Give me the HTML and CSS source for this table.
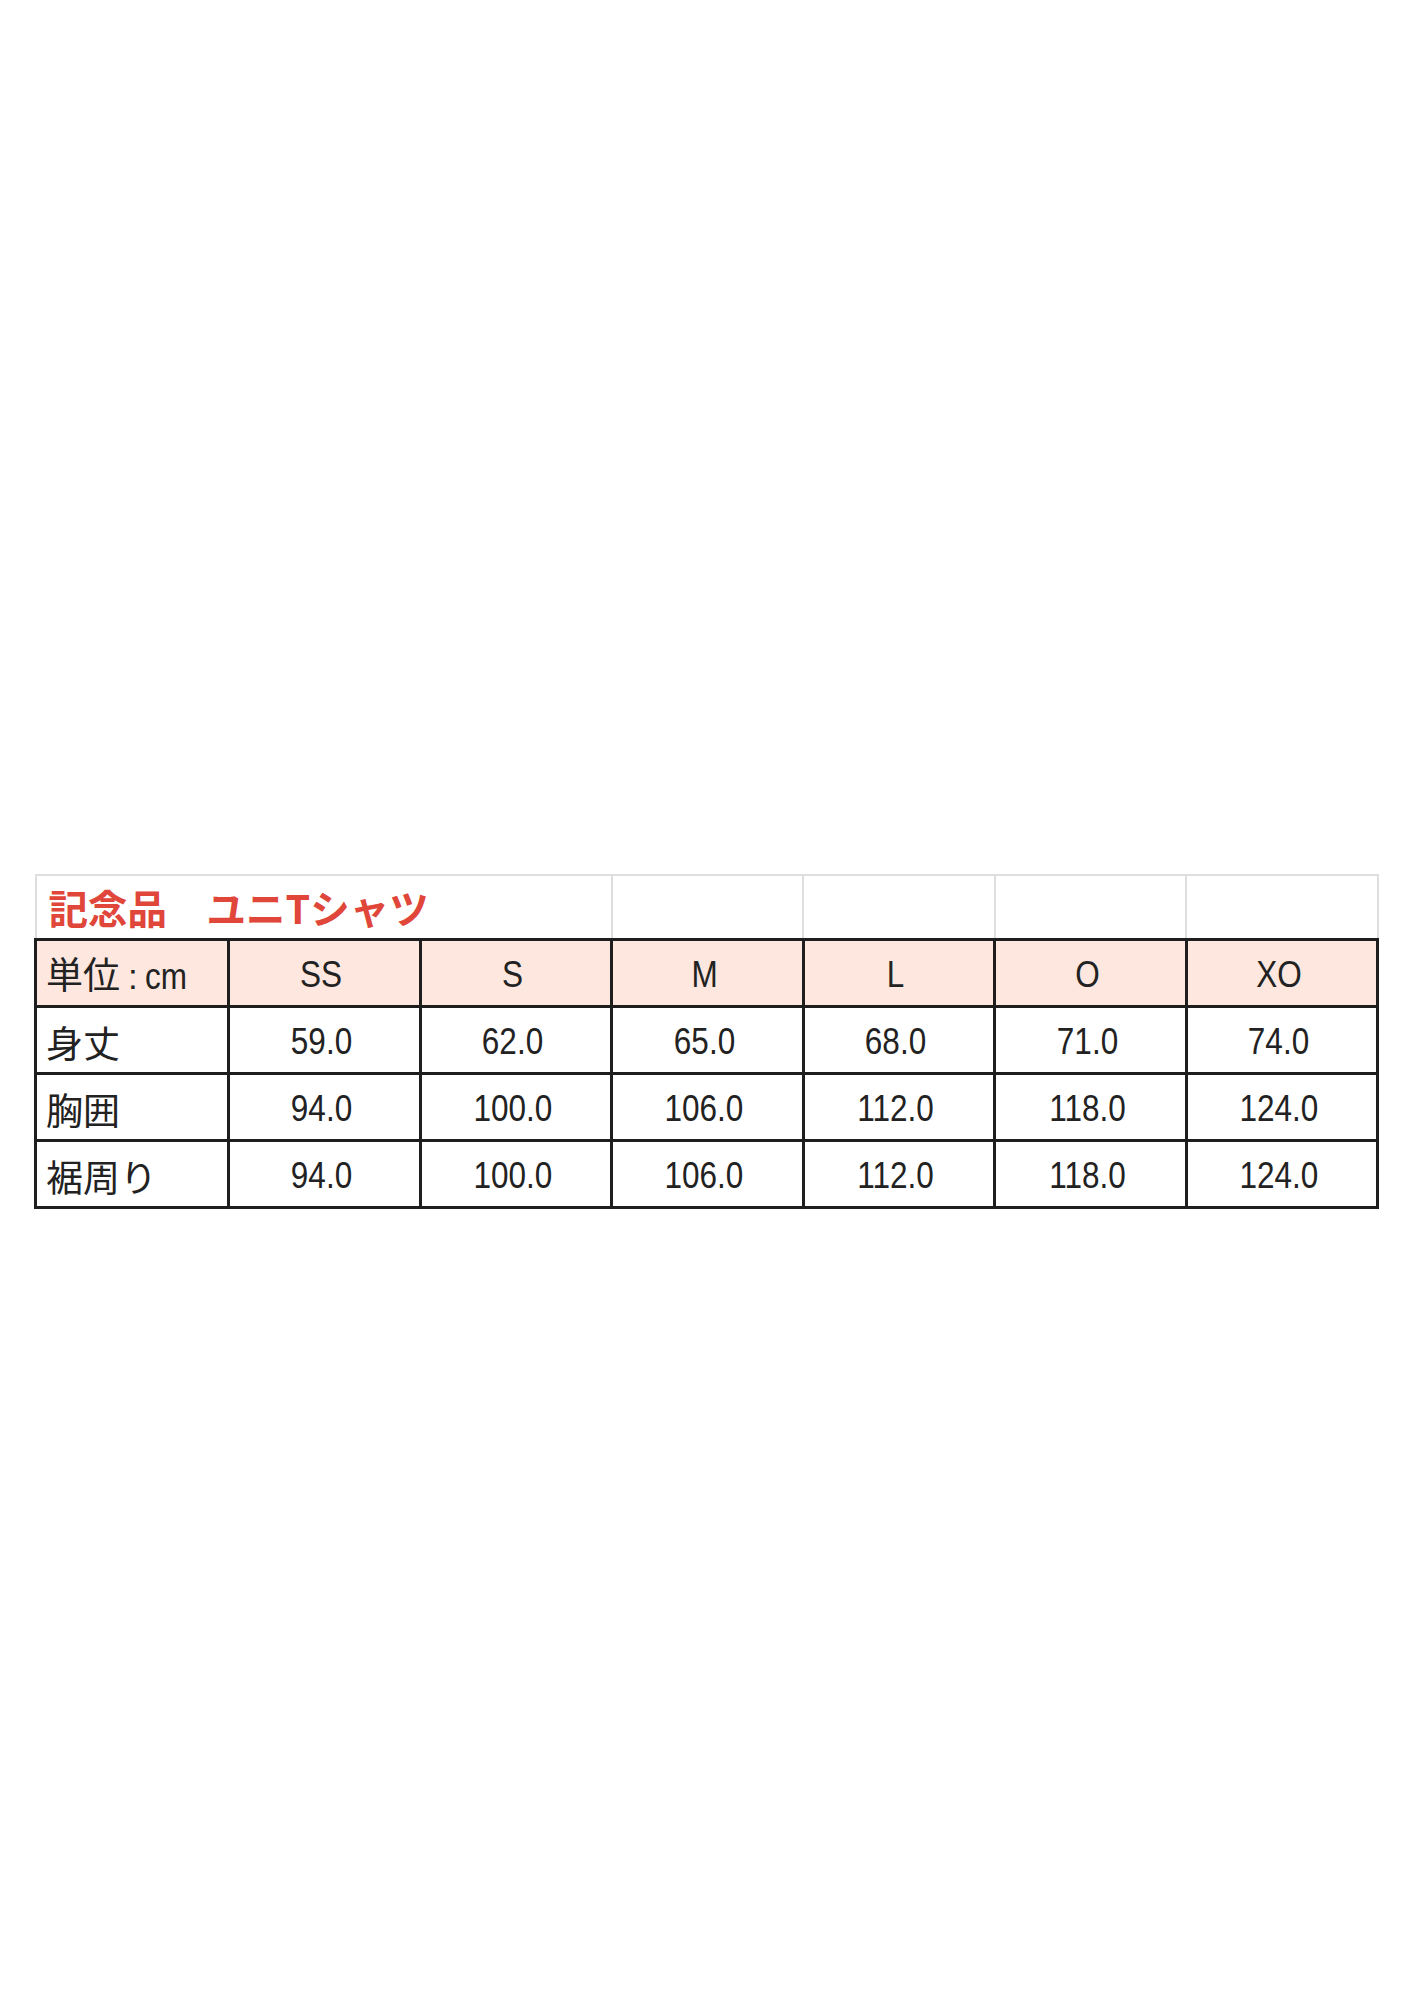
FILE: index.html
```html
<!DOCTYPE html>
<html lang="ja">
<head>
<meta charset="utf-8">
<title>記念品 ユニTシャツ</title>
<link rel="stylesheet" href="styles.css">
</head>
<body>
<div class="page">
  <table class="size-table">
    <colgroup>
      <col class="c-label">
      <col class="c-size"><col class="c-size"><col class="c-size">
      <col class="c-size"><col class="c-size"><col class="c-size">
    </colgroup>
    <tr class="title-row">
      <td colspan="3" class="title">記念品　ユニTシャツ</td>
      <td></td><td></td><td></td><td></td>
    </tr>
    <tr class="head-row">
      <td class="label">単位<span class="colon">:</span><span class="n unit">cm</span></td>
      <td><span class="n">SS</span></td><td><span class="n">S</span></td><td><span class="n">M</span></td>
      <td><span class="n">L</span></td><td><span class="n">O</span></td><td><span class="n">XO</span></td>
    </tr>
    <tr class="data-row">
      <td class="label">身丈</td>
      <td><span class="n">59.0</span></td><td><span class="n">62.0</span></td><td><span class="n">65.0</span></td>
      <td><span class="n">68.0</span></td><td><span class="n">71.0</span></td><td><span class="n">74.0</span></td>
    </tr>
    <tr class="data-row">
      <td class="label">胸囲</td>
      <td><span class="n">94.0</span></td><td><span class="n">100.0</span></td><td><span class="n">106.0</span></td>
      <td><span class="n">112.0</span></td><td><span class="n">118.0</span></td><td><span class="n">124.0</span></td>
    </tr>
    <tr class="data-row">
      <td class="label">裾周り</td>
      <td><span class="n">94.0</span></td><td><span class="n">100.0</span></td><td><span class="n">106.0</span></td>
      <td><span class="n">112.0</span></td><td><span class="n">118.0</span></td><td><span class="n">124.0</span></td>
    </tr>
  </table>
</div>
</body>
</html>
```
FILE: styles.css
```css
html, body {
  margin: 0;
  padding: 0;
  background: #ffffff;
}
.page {
  padding: 874px 0 0 34px;
  font-family: "Noto Sans CJK JP", "Liberation Sans", sans-serif;
  color: #222;
}
.size-table {
  border-collapse: collapse;
  table-layout: fixed;
  width: 1342px;
}
.c-label { width: 193px; }
.c-size { width: 191.5px; }
.size-table td {
  padding: 0;
  text-align: center;
  vertical-align: middle;
}
.title-row td {
  height: 62px;
  border: 2px solid #dedede;
}
.title-row .title {
  text-align: left;
  padding-left: 12px;
  color: #e0463a;
  font-weight: 700;
  font-size: 39.5px;
  line-height: 1;
}
.head-row td, .data-row td {
  height: 60px;
  border: 3px solid #1e1e1e;
  line-height: 1;
  padding-top: 4px;
}
.head-row td {
  background: #fde7de;
}
.size-table td.label {
  text-align: left;
  padding-left: 9px;
  font-size: 37px;
  font-weight: 400;
  font-family: "Noto Sans CJK JP", sans-serif;
  white-space: nowrap;
}
.n {
  display: inline-block;
  font-family: "Liberation Sans", Arial, sans-serif;
  font-size: 37.5px;
  font-weight: 400;
  transform: scaleX(0.84);
  margin-right: 6px;
}
.colon {
  font-family: "Liberation Sans", Arial, sans-serif;
  font-size: 35px;
  font-weight: 400;
  margin-left: 8px;
}
.unit {
  transform-origin: left center;
  margin-left: 7px;
}
```
